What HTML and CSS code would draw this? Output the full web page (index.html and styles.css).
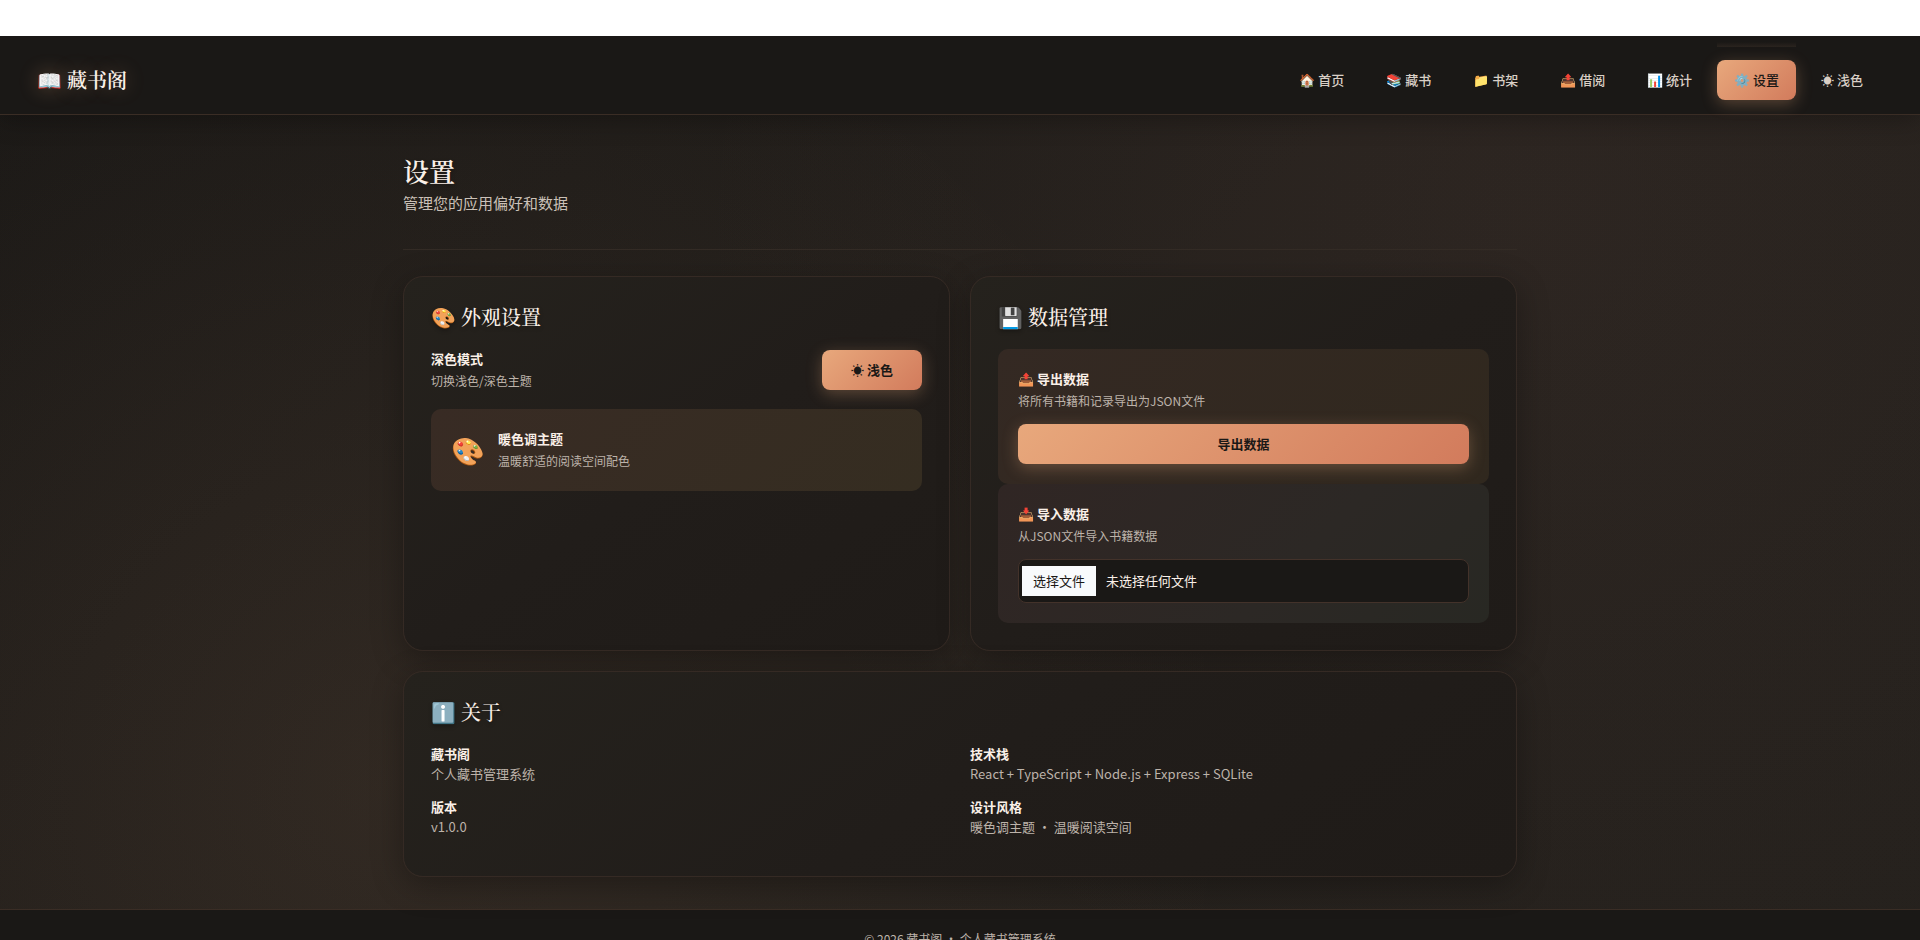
FILE: index.html
```html
<!DOCTYPE html>
<html lang="zh-CN">
<head>
    <meta charset="UTF-8">
    <meta name="viewport" content="width=device-width, initial-scale=1.0">
    <title>藏书阁</title>
    <link rel="stylesheet" href="styles.css">
</head>
<body>
    <div class="app">
        <header class="header">
            <a class="logo" href="#">📖 藏书阁</a>
            <nav class="nav">
                <a class="nav-link" href="#">🏠 首页</a>
                <a class="nav-link" href="#">📚 藏书</a>
                <a class="nav-link" href="#">📁 书架</a>
                <a class="nav-link" href="#">📤 借阅</a>
                <a class="nav-link" href="#">📊 统计</a>
                <a class="nav-link active" href="#">⚙️ 设置</a>
                <button type="button" class="nav-link">☀ 浅色</button>
            </nav>
        </header>

        <main class="container">
            <div class="page-header">
                <h1>设置</h1>
                <p>管理您的应用偏好和数据</p>
            </div>

            <div class="cards">
                <section class="card">
                    <h2>🎨 外观设置</h2>
                    <div class="setting-row">
                        <div>
                            <div class="item-title">深色模式</div>
                            <div class="item-desc">切换浅色/深色主题</div>
                        </div>
                        <button type="button" class="btn">☀ 浅色</button>
                    </div>
                    <div class="theme-box">
                        <span class="theme-icon">🎨</span>
                        <div>
                            <div class="item-title">暖色调主题</div>
                            <div class="item-desc">温暖舒适的阅读空间配色</div>
                        </div>
                    </div>
                </section>

                <section class="card">
                    <h2>💾 数据管理</h2>
                    <div class="data-box export">
                        <div class="item-title">📤 导出数据</div>
                        <div class="item-desc">将所有书籍和记录导出为JSON文件</div>
                        <button type="button" class="btn btn-block">导出数据</button>
                    </div>
                    <div class="data-box import">
                        <div class="item-title">📥 导入数据</div>
                        <div class="item-desc">从JSON文件导入书籍数据</div>
                        <label class="file-field" for="importFile">
                            <input type="file" id="importFile" accept=".json">
                            <span class="file-button">选择文件</span>
                            <span>未选择任何文件</span>
                        </label>
                    </div>
                </section>

                <section class="card card-wide">
                    <h2>ℹ️ 关于</h2>
                    <dl class="about">
                        <div>
                            <dt>藏书阁</dt>
                            <dd>个人藏书管理系统</dd>
                        </div>
                        <div>
                            <dt>技术栈</dt>
                            <dd>React + TypeScript + Node.js + Express + SQLite</dd>
                        </div>
                        <div>
                            <dt>版本</dt>
                            <dd>v1.0.0</dd>
                        </div>
                        <div>
                            <dt>设计风格</dt>
                            <dd>暖色调主题 · 温暖阅读空间</dd>
                        </div>
                    </dl>
                </section>
            </div>
        </main>

        <footer class="footer">© 2026 藏书阁 · 个人藏书管理系统</footer>
    </div>
</body>
</html>
```
FILE: styles.css
```css
* {
    box-sizing: border-box;
}
body {
    margin: 0;
    padding-top: 36px;
    background: #fff;
    font-family: "Noto Sans CJK SC", sans-serif;
    font-size: 13px;
    line-height: 20px;
    color: #faf0e8;
}
h1, h2, p, dl, dd {
    margin: 0;
}
a {
    text-decoration: none;
}
button {
    font-family: inherit;
    font-size: 13px;
    line-height: 20px;
    cursor: pointer;
}
.app {
    overflow: hidden;
    background:
        radial-gradient(circle at 20% 80%, rgba(232, 168, 124, 0.08) 0%, transparent 50%),
        radial-gradient(circle at 80% 20%, rgba(212, 140, 130, 0.05) 0%, transparent 50%),
        linear-gradient(135deg, #1a1816 0%, #24201c 50%, #25211d 100%);
}

/* header */
.header {
    position: relative;
    display: flex;
    justify-content: space-between;
    align-items: center;
    height: 79px;
    padding: 9px 40px 0 37px;
    background: #1a1816;
    border-bottom: 1px solid #3a2d25;
    box-shadow: 0 4px 24px rgba(0, 0, 0, 0.3);
}
.logo {
    font-family: "Noto Serif CJK SC", "Noto Sans CJK SC", serif;
    font-size: 20px;
    line-height: 28px;
    font-weight: 600;
    color: #faf0e8;
    text-shadow: 0 0 20px rgba(232, 168, 124, 0.3);
}
.nav {
    display: flex;
    gap: 8px;
}
.nav-link {
    padding: 10px 17px;
    border: none;
    border-radius: 8px;
    background: none;
    font-weight: 500;
    color: #d9cfc6;
}
.nav-link.active {
    position: relative;
    background: linear-gradient(135deg, #e8a87c, #d27b5c);
    color: #1a1816;
    box-shadow: 0 4px 16px rgba(232, 168, 124, 0.3);
}
/* faint glow above the active link */
.nav-link.active::before {
    content: "";
    position: absolute;
    top: -18px;
    left: 0;
    right: 0;
    height: 5px;
    background: linear-gradient(to top, rgba(232, 168, 124, 0.08), transparent);
}

/* page */
.container {
    max-width: 1154px;
    margin: 0 auto;
    padding: 36px 20px 32px;
}
.page-header {
    margin-bottom: 26px;
    padding-bottom: 33px;
    border-bottom: 1px solid #332b25;
}
h1, h2 {
    font-family: "Noto Serif CJK SC", "Noto Sans CJK SC", serif;
    text-shadow: 0 2px 4px rgba(0, 0, 0, 0.3);
}
h1 {
    font-size: 26px;
    line-height: 40px;
    font-weight: 600;
}
.page-header p {
    font-size: 15px;
    line-height: 24px;
    padding-bottom: 1px;
    color: #cbc1b8;
}
.cards {
    display: grid;
    grid-template-columns: 1fr 1fr;
    gap: 20px;
}
.card {
    padding: 27px;
    border: 1px solid #352a24;
    border-radius: 20px;
    background: linear-gradient(145deg, #25221d 0%, #211d1a 50%, #1f1b18 100%);
    box-shadow: 0 8px 32px rgba(0, 0, 0, 0.3);
}
.card-wide {
    grid-column: 1 / -1;
}
h2 {
    margin-bottom: 19px;
    font-size: 20px;
    line-height: 26px;
    font-weight: 500;
}
.item-title {
    margin-bottom: 2px;
    font-weight: 600;
}
.item-desc {
    font-size: 12px;
    color: #bdb3aa;
}
.setting-row {
    display: flex;
    justify-content: space-between;
    align-items: center;
}
.btn {
    padding: 10px 29px;
    border: none;
    border-radius: 8px;
    background: linear-gradient(135deg, #e8a87c, #d27b5c);
    font-weight: 600;
    color: #1a1816;
    box-shadow: 0 4px 16px rgba(232, 168, 124, 0.3);
}
.btn-block {
    display: block;
    width: 100%;
    margin-top: 13px;
}
.theme-box {
    display: flex;
    align-items: center;
    gap: 13px;
    margin-top: 18px;
    padding: 20px;
    border-radius: 10px;
    background: linear-gradient(135deg, #382b24, #352d21);
}
.theme-icon {
    font-size: 27px;
    line-height: 32px;
}
.data-box {
    padding: 20px;
    border-radius: 10px;
}
.data-box.export {
    background: linear-gradient(135deg, #342923, #30281e);
}
.data-box.import {
    background: linear-gradient(135deg, #302624, #2c2825 60%, #282823);
}
.file-field {
    position: relative;
    display: flex;
    align-items: center;
    gap: 10px;
    height: 44px;
    margin-top: 13px;
    padding: 0 3px;
    border: 1px solid #43322a;
    border-radius: 8px;
    background: #1a1816;
    cursor: pointer;
}
.file-field input {
    position: absolute;
    inset: 0;
    width: 100%;
    opacity: 0;
}
.file-button {
    padding: 5px 11px;
    background: #f8fafc;
    color: #1a1816;
}
.about {
    display: grid;
    grid-template-columns: 1fr 1fr;
    gap: 13px 20px;
    padding-bottom: 12px;
}
.about dt {
    font-weight: 600;
}
.about dd {
    color: #bdb3aa;
}

/* footer */
.footer {
    padding: 20px;
    border-top: 1px solid #3a2d25;
    background: #1a1816;
    font-size: 12px;
    line-height: 18px;
    text-align: center;
    color: #bdb3aa;
}
```
